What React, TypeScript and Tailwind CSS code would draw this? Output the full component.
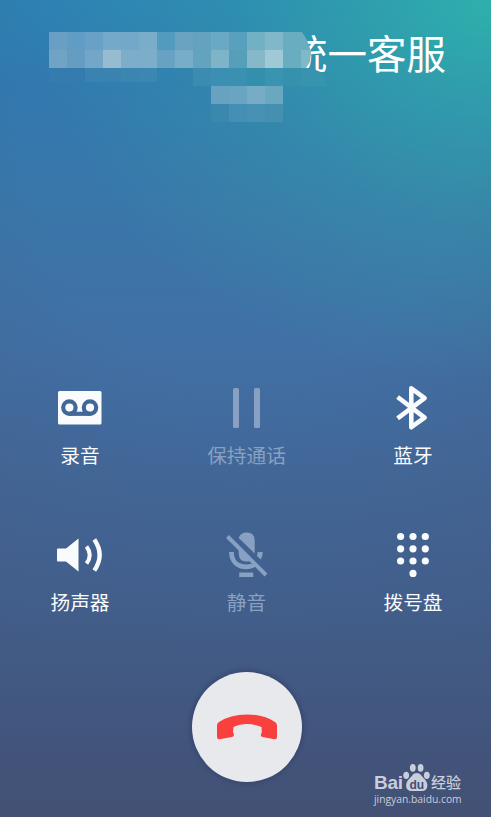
import type { ReactNode } from "react";

interface ActionI {
  label: string;
  icon: ReactNode;
  disabled?: boolean;
}

const RecordIcon = () => (
  <svg width="56" height="48" viewBox="0 0 56 48" fill="none">
    <rect x="6" y="7" width="43.5" height="33.5" rx="1.5" fill="currentColor" />
    <g stroke="#406999" strokeWidth="4.2">
      <circle cx="17.4" cy="23.6" r="6.2" />
      <circle cx="38" cy="23.6" r="6.2" />
      <path d="M17.4 29.8H38" />
    </g>
  </svg>
);

const PauseIcon = () => (
  <svg width="56" height="48" viewBox="0 0 56 48" fill="currentColor">
    <rect x="14" y="4" width="6" height="40" rx="1.5" />
    <rect x="35" y="4" width="6" height="40" rx="1.5" />
  </svg>
);

const BluetoothIcon = () => (
  <svg width="56" height="48" viewBox="0 0 56 48" fill="none" stroke="currentColor" strokeWidth="4.6" strokeLinejoin="round">
    <path d="M12.6 13L39.6 33.6L26.3 43.2V4.4L39.6 14.2L12.6 34.4" />
  </svg>
);

const SpeakerIcon = () => (
  <svg width="56" height="48" viewBox="0 0 56 48" fill="none">
    <path d="M6 17.5H14L26.5 7.5V40.5L14 30.5H6Q5 30.5 5 29.5V18.5Q5 17.5 6 17.5Z" fill="currentColor" />
    <path d="M34.5 15.5Q41 24 34.5 32.5" stroke="currentColor" strokeWidth="4" />
    <path d="M42.3 8.5Q53 24 42.3 39.5" stroke="currentColor" strokeWidth="4.4" />
  </svg>
);

const MicOffIcon = () => (
  <svg width="56" height="48" viewBox="0 0 56 48" fill="none">
    <path d="M19.7 7Q21.3 1.5 27.7 1.5Q35.7 1.5 35.7 9.5V22.4Z" fill="currentColor" />
    <path d="M19.7 16L33.5 29Q31 30.6 27.7 30.6Q19.7 30.6 19.7 22.6Z" fill="currentColor" />
    <path d="M12.5 21C12.5 31 19 35.8 27.5 35.8C31 35.8 34 35 36.5 33" stroke="currentColor" strokeWidth="4.8" />
    <path d="M38.5 21H43.7Q43.7 25 41.9 28.5L37.9 25Q38.5 23.3 38.5 21Z" fill="currentColor" />
    <path d="M8.5 5.5L47 44" stroke="currentColor" strokeWidth="4" />
    <path d="M20.2 41.5H34.2V46H20.2Z" fill="currentColor" />
  </svg>
);

const DialpadIcon = () => (
  <svg width="56" height="48" viewBox="0 0 56 48" fill="currentColor">
    {[5.5, 17.8, 30].map((y) =>
      [15.6, 28, 40.3].map((x) => <circle key={`${x}-${y}`} cx={x} cy={y} r="3.6" />)
    )}
    <circle cx="28" cy="42.4" r="3.6" />
  </svg>
);

const actions: ActionI[] = [
  { label: "录音", icon: <RecordIcon /> },
  { label: "保持通话", icon: <PauseIcon />, disabled: true },
  { label: "蓝牙", icon: <BluetoothIcon /> },
  { label: "扬声器", icon: <SpeakerIcon /> },
  { label: "静音", icon: <MicOffIcon />, disabled: true },
  { label: "拨号盘", icon: <DialpadIcon /> },
];

// colour blocks that hide the caller's name and number
const nameBlocks = [
  ["#6a9fc5", "#619cc4", "#69a0c6", "#75a9ca", "#74a8c9", "#7aadc9", "#529abe", "#68a4c2", "#64a2c0", "#6aa9c3", "#58a0bd", "#72b0c4", "#80b8c9", "#69aec0", "#69aec0"],
  ["#71a3c4", "#669bc2", "#74a6c7", "#97bcd2", "#7dadc8", "#7cadc9", "#67a2c2", "#78adc7", "#62a3be", "#7eb4c8", "#569fb9", "#86b8ca", "#a0c9d6", "#69aec0", "#7fb9c6"],
];
const fadeBlocks = ["#347cae", "#347cae", "#3a82b0", "#3a82b0", "#3b86b1", "#3b87b1", "", "", "#3c8cb2", "#3b8fb2", "#3a90b0", "#338fac", "#3894b0", "#3591ae", "#3793ae", "#3795ad"];
const numberBlocks = [
  ["#67a2c0", "#69a4c2", "#76adc4", "#6aa8c0"],
  ["#3b88af", "#448fb3", "#4691b4", "#4590b1"],
];

const Blocks = ({ colors }: { colors: string[] }) => (
  <div className="flex">
    {colors.map((color, i) => (
      <div key={i} className="h-[18px] w-[18px] shrink-0" style={{ backgroundColor: color || "transparent" }} />
    ))}
  </div>
);

const Caller = () => (
  <header className="relative h-[384px] shrink-0">
    <h1 className="pt-[22px] pr-[45px] text-right text-[39.5px] leading-[60px] font-normal text-white">统一客服</h1>
    <div className="absolute top-[32px] left-[49px]">
      <div className="w-[262px] overflow-hidden [clip-path:polygon(0_0,253px_0,258px_8px,262px_20px,261px_30px,257px_36px,0_36px)]">
        {nameBlocks.map((row, i) => (
          <Blocks key={i} colors={row} />
        ))}
      </div>
      <div className="[clip-path:polygon(0_0,262px_0,274px_5px,279px_18px,144px_18px,144px_14px,0_14px)]">
        <Blocks colors={fadeBlocks} />
      </div>
      <div className="pl-[162px]">
        {numberBlocks.map((row, i) => (
          <Blocks key={i} colors={row} />
        ))}
      </div>
    </div>
  </header>
);

const Action = ({ label, icon, disabled }: ActionI) => (
  <button className={`flex h-[147px] flex-col items-center ${disabled ? "text-[#88a1c2]" : "text-[#fafbfc]"}`}>
    {icon}
    <span className="mt-[8px] text-[19.7px] leading-[30px] whitespace-nowrap">{label}</span>
  </button>
);

const Watermark = () => (
  <div className="absolute top-[762px] left-[374px] w-[92px] font-[Open_Sans,Noto_Sans_CJK_SC,sans-serif] text-[#c9cedb]">
    <div className="flex h-[30px] items-end">
      <span className="w-[29px] font-['Liberation_Sans'] text-[19px] leading-[18px] font-bold tracking-[-0.3px]">Bai</span>
      <svg width="27" height="30" viewBox="0 0 27 30" fill="currentColor">
        <ellipse cx="3.2" cy="13.3" rx="2.9" ry="3.6" />
        <ellipse cx="9.8" cy="5.8" rx="2.9" ry="3.9" />
        <ellipse cx="17.6" cy="5.8" rx="2.9" ry="3.9" />
        <ellipse cx="23.8" cy="13.3" rx="2.9" ry="3.6" />
        <path d="M13.5 11C17.5 11 18.5 14 21 16.5C26 21 25.5 29 19 29H8.5C2 29 1.5 21 6.5 16.5C9.5 14 10 11 13.5 11Z" />
        <text x="6.5" y="26.5" fontSize="12" fontWeight="bold" fill="#424f76" fontFamily="Liberation Sans">du</text>
      </svg>
      <span className="pl-px text-[15px] leading-[20px] font-medium">经验</span>
    </div>
    <div className="text-[10.3px] leading-[14px] font-medium">jingyan.baidu.com</div>
  </div>
);

const App = () => {
  return (
    <main className="relative flex h-[817px] w-[491px] flex-col overflow-hidden bg-[radial-gradient(ellipse_460px_380px_at_100%_0%,#2eb0ac_0%,#2fadabb0_25%,#32a8a950_58%,#38a0a500_100%),radial-gradient(ellipse_500px_580px_at_50%_120px,#42608e00_45%,#44587f70_100%),linear-gradient(180deg,#2d81b4_0%,#3179b0_10%,#3a76a9_25%,#4170a5_43%,#41699b_58%,#416292_73%,#405a84_83%,#415078_92%,#424b6c_100%)] bg-no-repeat font-[Noto_Sans_CJK_SC,sans-serif]">
      <Caller />
      <section className="grid grid-cols-[100px_100px_100px] justify-center gap-x-[66.5px] pl-[2px]">
        {actions.map((action) => (
          <Action key={action.label} {...action} />
        ))}
      </section>
      <div className="-mt-[6px] flex justify-center pl-[2px]">
        <button className="flex h-[110px] w-[110px] items-center justify-center rounded-full bg-[#e7e9ec] shadow-[0_0_3px_3px_#39496fb0]">
          <svg width="62" height="26" viewBox="0 0 62 26" fill="#fa3f3f">
            <path d="M1 11.5Q1 9.5 2.6 8.2Q14 0.5 31 0.5Q48 0.5 59.4 8.2Q61 9.5 61 11.5V23Q61 25.5 58.5 25.3L46.5 23Q44.3 22.5 44.9 20.5L45.8 18.5L45.5 13Q38.5 10 31 10Q23.5 10 17.5 13L17 18L18 20.5Q18.2 22.5 16 23L3.5 25.3Q1 25.5 1 23Z" />
          </svg>
        </button>
      </div>
      <Watermark />
    </main>
  );
};

export default App;
